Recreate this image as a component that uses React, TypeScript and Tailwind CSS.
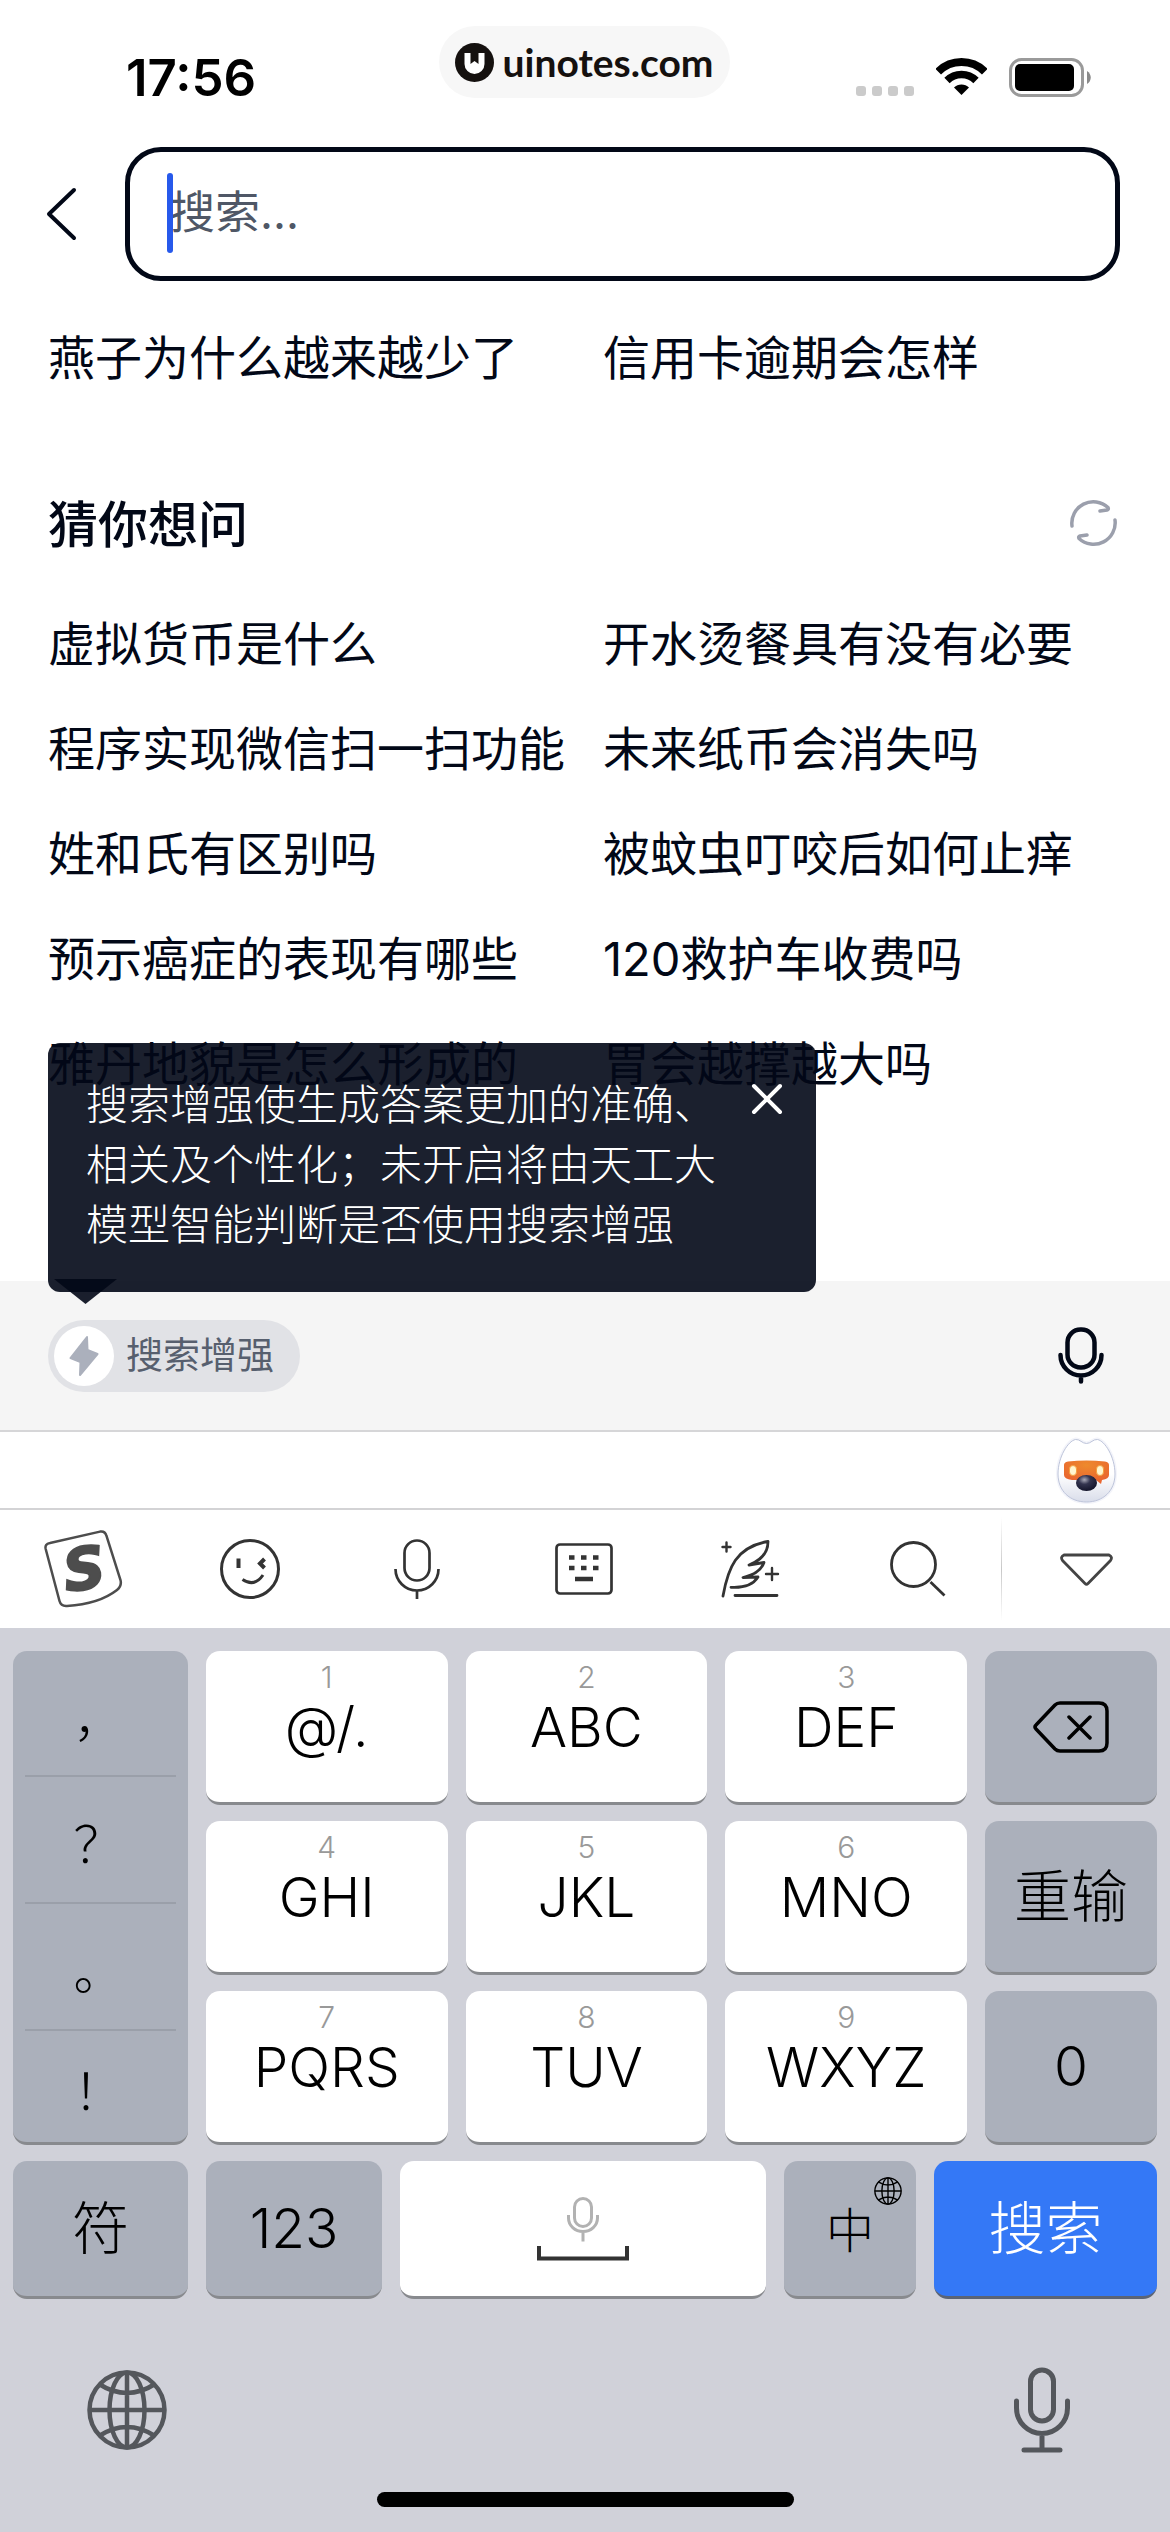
import type { ReactNode } from "react";

const recent = ["燕子为什么越来越少了", "信用卡逾期会怎样"];

const guesses = [
    "虚拟货币是什么",
    "开水烫餐具有没有必要",
    "程序实现微信扫一扫功能",
    "未来纸币会消失吗",
    "姓和氏有区别吗",
    "被蚊虫叮咬后如何止痒",
    "预示癌症的表现有哪些",
    "120救护车收费吗",
    "雅丹地貌是怎么形成的",
    "胃会越撑越大吗",
];

const letterKeys = [
    ["1", "@/."],
    ["2", "ABC"],
    ["3", "DEF"],
    ["4", "GHI"],
    ["5", "JKL"],
    ["6", "MNO"],
    ["7", "PQRS"],
    ["8", "TUV"],
    ["9", "WXYZ"],
];

function StatusBar() {
    return (
        <div className="grid h-[147px] grid-cols-[1fr_auto_1fr] items-start pt-[26px] pr-[79px] pl-[126px]">
            <span className="mt-7 text-[51px] leading-12 font-semibold text-black">17:56</span>
            <div className="-ml-12 flex h-18 items-center gap-2 rounded-full bg-[#f7f7f7] px-4 font-[Lato,sans-serif]">
                <svg width="39" height="39" viewBox="0 0 39 39" aria-hidden="true">
                    <circle cx="19.5" cy="19.5" r="19.5" fill="#15110f" />
                    <path d="M9.5 10h6v11l4-3 4 3V10h6v11a10 10 0 0 1-20 0z" fill="#fff" />
                </svg>
                <span className="text-[39px] leading-12 font-bold text-[#15110f]">uinotes.com</span>
            </div>
            <div className="mt-8 flex h-[39px] items-end justify-end">
                <div className="mr-[22px] flex gap-[6px] pb-px">
                    <i className="size-[10px] rounded-[3px] bg-[#cbcbcb]" />
                    <i className="size-[10px] rounded-[3px] bg-[#cbcbcb]" />
                    <i className="size-[10px] rounded-[3px] bg-[#cbcbcb]" />
                    <i className="size-[10px] rounded-[3px] bg-[#cbcbcb]" />
                </div>
                <svg className="mr-[22px] mb-px" width="51" height="38" viewBox="0 0 51 38" fill="none" stroke="#000" aria-hidden="true">
                    <path d="M2.2 13.7a33 33 0 0 1 46.6 0" strokeWidth="8" />
                    <path d="M11 22.5a20.5 20.5 0 0 1 29 0" strokeWidth="7.5" />
                    <path d="M25.5 37 18 29.5a10.6 10.6 0 0 1 15 0z" fill="#000" stroke="none" />
                </svg>
                <svg width="82" height="39" viewBox="0 0 82 39" aria-hidden="true">
                    <rect x="1.5" y="1.5" width="72" height="36" rx="11" fill="none" stroke="#9a9a9a" strokeWidth="3" />
                    <rect x="6" y="6" width="59" height="27" rx="5" fill="#000" />
                    <path d="M78 13c5 3 5 10 0 13z" fill="#8a8a8a" />
                </svg>
            </div>
        </div>
    );
}

function SearchBar() {
    return (
        <div className="flex items-center pr-[50px] pl-[46px]">
            <button type="button" aria-label="返回" className="mr-12">
                <svg width="31" height="54" viewBox="0 0 31 54" fill="none" stroke="#020817" strokeWidth="4" strokeLinecap="round" strokeLinejoin="round">
                    <path d="M28 3 3 27l25 24" />
                </svg>
            </button>
            <div className="relative flex-1">
                <input
                    type="text"
                    aria-label="搜索"
                    placeholder="搜索..."
                    className="block h-[134px] w-full rounded-[36px] border-5 border-[#020817] bg-white pb-1 pl-10 text-[45px] outline-none placeholder:text-[#4f5766] placeholder:opacity-100"
                />
                <span className="absolute top-[26px] left-[42px] h-20 w-[6px] rounded-sm bg-[#2759eb]" />
            </div>
        </div>
    );
}

function LinkGrid({ items }: { items: string[] }) {
    return (
        <ul className="grid grid-cols-[555fr_567fr] pl-12">
            {items.map((item) => (
                <li key={item} className="flex h-[105px] items-center">
                    <a href="#" className="text-[47px] leading-15 whitespace-nowrap">{item}</a>
                </li>
            ))}
        </ul>
    );
}

function Tooltip() {
    return (
        <div role="tooltip" className="absolute -top-[238px] left-12 flex h-[249px] w-[768px] items-start justify-between rounded-xl bg-[#020817]/90 pt-8 pr-[33px] pl-[38px]">
            <p className="w-[640px] text-[42px] leading-[60px] font-light text-white">
                搜索增强使生成答案更加的准确、相关及个性化；未开启将由天工大模型智能判断是否使用搜索增强
            </p>
            <button type="button" aria-label="关闭" className="mt-2">
                <svg width="32" height="32" viewBox="0 0 32 32" stroke="#fff" strokeWidth="4" strokeLinecap="round">
                    <path d="m3 3 26 26M29 3 3 29" />
                </svg>
            </button>
            <svg className="absolute -bottom-3 left-[6px]" width="63" height="25" viewBox="0 0 63 25" aria-hidden="true">
                <path d="M0 0h63L31.5 25z" fill="#020817" fillOpacity=".9" />
            </svg>
        </div>
    );
}

function EnhanceBar() {
    return (
        <div className="relative flex h-[151px] items-center justify-between border-b-2 border-[#d6d6d8] bg-[#f5f5f5] pr-[66px] pl-12">
            <Tooltip />
            <button type="button" className="flex h-18 items-center gap-3 rounded-full bg-[#e1e2e6] pr-[26px] pl-[6px]">
                <span className="flex size-[60px] items-center justify-center rounded-full bg-white">
                    <svg width="30" height="40" viewBox="0 0 30 40" fill="#abb0bc" stroke="#abb0bc" strokeWidth="2" strokeLinejoin="round">
                        <path d="M18 1 1.5 22l10 4L11 39 28.5 18l-10-4z" />
                    </svg>
                </span>
                <span className="text-[37px] leading-12 text-[#575f6e]">搜索增强</span>
            </button>
            <button type="button" aria-label="语音输入">
                <svg width="46" height="57" viewBox="0 0 46 57" fill="none" stroke="#020817" strokeWidth="4.5" strokeLinecap="round">
                    <rect x="9.5" y="2.5" width="27" height="38" rx="13" />
                    <path d="M2.5 28a20.5 20.5 0 0 0 41 0M23 49v5.5" />
                </svg>
            </button>
        </div>
    );
}

function MascotStrip() {
    return (
        <div className="flex h-[78px] items-center justify-end border-b-2 border-[#d3d3d5] pr-[51px]">
            <svg width="65" height="71" viewBox="-4 -4 65 71" aria-hidden="true">
                <defs>
                    <linearGradient id="face" x1="0" y1="0" x2="0" y2="1">
                        <stop offset=".55" stopColor="#fff" />
                        <stop offset="1" stopColor="#d9ddea" />
                    </linearGradient>
                    <radialGradient id="nose" cx=".4" cy=".3" r=".7">
                        <stop offset="0" stopColor="#a9a9b8" />
                        <stop offset=".4" stopColor="#33344f" />
                        <stop offset="1" stopColor="#14152b" />
                    </radialGradient>
                    <radialGradient id="visor" cx=".5" cy=".2" r=".7">
                        <stop offset="0" stopColor="#ee8a2c" />
                        <stop offset="1" stopColor="#e9662f" />
                    </radialGradient>
                </defs>
                <path d="M28.5 4.500C24 4.500 22 0 17.500.5 10 2 0 18 0 35s12 28 28.500 28S57 52 57 35 47 2 39.500.5C35 0 33 4.500 28.500 4.500z" fill="#f3f4fa" stroke="#f3f4fa" strokeWidth="4" />
                <path d="M28.5 4.500C24 4.500 22 0 17.500.5 10 2 0 18 0 35s12 28 28.500 28S57 52 57 35 47 2 39.500.5C35 0 33 4.500 28.500 4.500z" fill="url(#face)" stroke="#bdc4da" />
                <path d="M6 26q0-3 4-3.500 18.500-2 37 0 4 .5 4 3.500v10q0 4-7 5l-1 4-5-4H14q-8-1-8-5z" fill="url(#visor)" />
                <rect x="11.5" y="26.500" width="7" height="10" rx="3.500" fill="#fff6cf" stroke="#f5a03f" />
                <rect x="38.500" y="26.500" width="7" height="10" rx="3.500" fill="#fff6cf" stroke="#f5a03f" />
                <ellipse cx="28.500" cy="44" rx="10.500" ry="8" fill="url(#nose)" />
            </svg>
        </div>
    );
}

function ToolButton({ label, children }: { label: string; children: ReactNode }) {
    return (
        <button type="button" aria-label={label} className="flex h-full flex-1 items-center justify-center">
            {children}
        </button>
    );
}

function Toolbar() {
    return (
        <div className="flex h-[118px] items-center">
            <div className="flex h-full flex-1">
                <ToolButton label="搜狗输入法">
                    <svg width="79" height="78" viewBox="0 0 79 78">
                        <path d="M6 13 56 1.600q5-1 6.500 4.400l14 44q1.500 6-3.500 10-18 14-50 16-6 .5-7.500-5L1.700 19Q.5 14 6 13z" fill="none" stroke="#4d4d4d" strokeWidth="2.500" />
                        <text x="40" y="59" transform="rotate(-8 40 38)" textAnchor="middle" fontFamily="DejaVu Sans" fontWeight="700" fontStyle="italic" fontSize="58" fill="#4d4d4d" stroke="#4d4d4d" strokeWidth="2">S</text>
                    </svg>
                </ToolButton>
                <ToolButton label="表情">
                    <svg width="60" height="60" viewBox="0 0 60 60" fill="none" stroke="#333" strokeWidth="3">
                        <circle cx="30" cy="30" r="28.5" />
                        <path d="M18.5 19.500v9.500M44.500 20l-4.500 4.500 4.500 4.500" strokeWidth="4" />
                        <path d="M22.500 40.500q12 8 20.500-4.500" />
                    </svg>
                </ToolButton>
                <ToolButton label="语音">
                    <svg width="46" height="60" viewBox="0 0 46 60" fill="none" stroke="#333" strokeWidth="2.700">
                        <rect x="10.5" y="1.5" width="25" height="40" rx="12.5" />
                        <path d="M1.5 30a21.500 21.500 0 0 0 43 0M23 51.500V60" />
                    </svg>
                </ToolButton>
                <ToolButton label="键盘切换">
                    <svg width="58" height="52" viewBox="0 0 58 52" fill="none" stroke="#333">
                        <rect x="1.5" y="1.5" width="55" height="49" rx="3.5" strokeWidth="2.7" />
                        <path d="M14 14.500h5.500m6.500 0h5.500m6.500 0h5.500M14 25h5.500m6.500 0h5.500m6.500 0h5.500M20 36h18" strokeWidth="4.300" />
                    </svg>
                </ToolButton>
                <ToolButton label="写作">
                    <svg width="59" height="58" viewBox="0 0 59 58" fill="none" stroke="#333" strokeWidth="2.8" strokeLinecap="round" strokeLinejoin="round">
                        <path d="M2 56C7 28 15 7 47 1.500 47 12 41 20 28 25l15-2.500C40 31 33 35 22 37.500l15-.5c-5 8-14 11-27 10.300M14 55.500h42" />
                        <path d="M5.500 2.500v9M1.500 7h8M51 28v12M45 34h12" strokeWidth="2.400" />
                    </svg>
                </ToolButton>
                <ToolButton label="搜索">
                    <svg width="56" height="56" viewBox="0 0 56 56" fill="none" stroke="#333" strokeWidth="2.8">
                        <circle cx="23.5" cy="23.5" r="22" />
                        <path d="m40.500 41 14 13.500" />
                    </svg>
                </ToolButton>
            </div>
            <span className="h-[104px] w-px bg-linear-to-b from-transparent via-[#c8c8c8] to-transparent" />
            <button type="button" aria-label="收起键盘" className="flex h-full w-[168px] items-center justify-center">
                <svg width="53" height="33" viewBox="0 0 53 33" fill="none" stroke="#444" strokeWidth="2.8" strokeLinejoin="round">
                    <path d="M4 2h45q4 2 1.500 5.500L28 30.500q-1.500 1.500-3 0L2.500 7.500Q0 4 4 2z" />
                </svg>
            </button>
        </div>
    );
}

const keyBase = "rounded-[14px] border-b-3 border-[#888a8e]";

function GrayKey({ className = "text-[57px]", label, children }: { className?: string; label?: string; children: ReactNode }) {
    return (
        <button type="button" aria-label={label} className={`${keyBase} flex items-center justify-center bg-[#abb0bb] font-light ${className}`}>
            {children}
        </button>
    );
}

function GlobeIcon({ size, stroke }: { size: number; stroke: number }) {
    return (
        <svg width={size} height={size} viewBox="0 0 80 80" fill="none" stroke="currentColor" strokeWidth={stroke} aria-hidden="true">
            <circle cx="40" cy="40" r="37.5" />
            <ellipse cx="40" cy="40" rx="17.5" ry="37.5" />
            <path d="M40 2v76M2 40h76M12 14q28 18 56 0M12 66q28-18 56 0" />
        </svg>
    );
}

function Keyboard() {
    return (
        <div className="bg-[#d0d1d9] text-black">
            <div className="grid grid-cols-[175fr_762fr_172fr] gap-x-[18px] px-[13px] pt-[23px]">
                <div className={`${keyBase} grid grid-rows-[126fr_127fr_127fr_111fr] bg-[#abb0bb] px-3 text-[50px] font-light`}>
                    <button type="button" className="border-b-2 border-[#9a9fa9] pt-3 pr-1">，</button>
                    <button type="button" className="border-b-2 border-[#9a9fa9] pt-3 pr-1">？</button>
                    <button type="button" className="border-b-2 border-[#9a9fa9] pt-3 pr-1">。</button>
                    <button type="button" className="pt-3 pr-1">！</button>
                </div>
                <div className="grid grid-cols-3 gap-x-[18px] gap-y-4">
                    {letterKeys.map(([digit, letters]) => (
                        <button key={digit} type="button" className={`${keyBase} flex h-[154px] flex-col items-center bg-white pt-2 font-light`}>
                            <span className="text-[30px] leading-9 text-[#999]">{digit}</span>
                            <span className="text-[55px] leading-16">{letters}</span>
                        </button>
                    ))}
                </div>
                <div className="grid grid-rows-3 gap-y-4">
                    <GrayKey label="删除">
                        <svg width="76" height="52" viewBox="0 0 76 52" fill="none" stroke="#000" strokeWidth="3.5" strokeLinecap="round" strokeLinejoin="round">
                            <path d="M27 2h39q8 0 8 8v32q0 8-8 8H27q-3 0-5-2L3 28q-2-2 0-4L22 4q2-2 5-2zM36 16l21 21M57 16 36 37" />
                        </svg>
                    </GrayKey>
                    <GrayKey>重输</GrayKey>
                    <GrayKey className="text-[55px]">0</GrayKey>
                </div>
            </div>
            <div className="grid h-[154px] grid-cols-[175fr_176fr_366fr_132fr_223fr] gap-x-[18px] px-[13px] pt-4">
                <GrayKey>符</GrayKey>
                <GrayKey className="text-[55px]">123</GrayKey>
                <button type="button" aria-label="空格" className={`${keyBase} flex items-center justify-center bg-white`}>
                    <svg width="92" height="64" viewBox="0 0 92 64" fill="none">
                        <g stroke="#b2b2b2" strokeWidth="3">
                            <rect x="37.5" y="1.5" width="17" height="28" rx="8.5" />
                            <path d="M31.500 18v3a14.500 13.500 0 0 0 29 0v-3M46 35v9.500" />
                        </g>
                        <path d="M2 49v12.500h88V49" stroke="#333" strokeWidth="4" />
                    </svg>
                </button>
                <GrayKey className="relative pt-1 text-[48px]">
                    中
                    <span className="absolute top-4 right-[14px]">
                        <GlobeIcon size={28} stroke={4} />
                    </span>
                </GrayKey>
                <button type="button" className="rounded-[14px] border-b-3 border-[#5b6475] bg-[#3478f6] text-[57px] font-light text-white">搜索</button>
            </div>
            <div className="flex h-[193px] items-center justify-between px-[87px] pt-7 text-[#54575c]">
                <button type="button" aria-label="切换语言">
                    <GlobeIcon size={80} stroke={4.5} />
                </button>
                <button type="button" aria-label="听写" className="mr-[13px]">
                    <svg width="56" height="86" viewBox="0 0 56 86" fill="none" stroke="currentColor" strokeWidth="5" strokeLinecap="round">
                        <rect x="16.5" y="3" width="23" height="51" rx="11.5" />
                        <path d="M2.500 34v7a25.500 25.500 0 0 0 51 0v-7M28 67v15M10 83h36" />
                    </svg>
                </button>
            </div>
            <div className="flex h-10 justify-center">
                <span className="h-[15px] w-[417px] rounded-full bg-black" />
            </div>
        </div>
    );
}

export default function App() {
    return (
        <div className="flex min-h-screen flex-col bg-white font-[Inter,'Noto_Sans_CJK_SC',sans-serif] text-[#020817]">
            <StatusBar />
            <SearchBar />
            <main className="flex-1 pt-6">
                <LinkGrid items={recent} />
                <div className="flex h-[181px] items-center justify-between pt-12 pr-[53px] pl-12">
                    <h2 className="text-[50px] leading-15 font-medium">猜你想问</h2>
                    <button type="button" aria-label="换一批" className="pb-1">
                        <svg width="47" height="48" viewBox="0 0 47 48" fill="none" stroke="#9b9fac" strokeWidth="3.5" strokeLinecap="round">
                            <path d="M2 27A21.500 21.500 0 0 1 38 8.500q1 2-1 2.500l-7 1M45 21A21.500 21.500 0 0 1 9 39.500q-1-2 1-2.500l7-1" />
                        </svg>
                    </button>
                </div>
                <LinkGrid items={guesses} />
            </main>
            <EnhanceBar />
            <MascotStrip />
            <Toolbar />
            <Keyboard />
        </div>
    );
}
